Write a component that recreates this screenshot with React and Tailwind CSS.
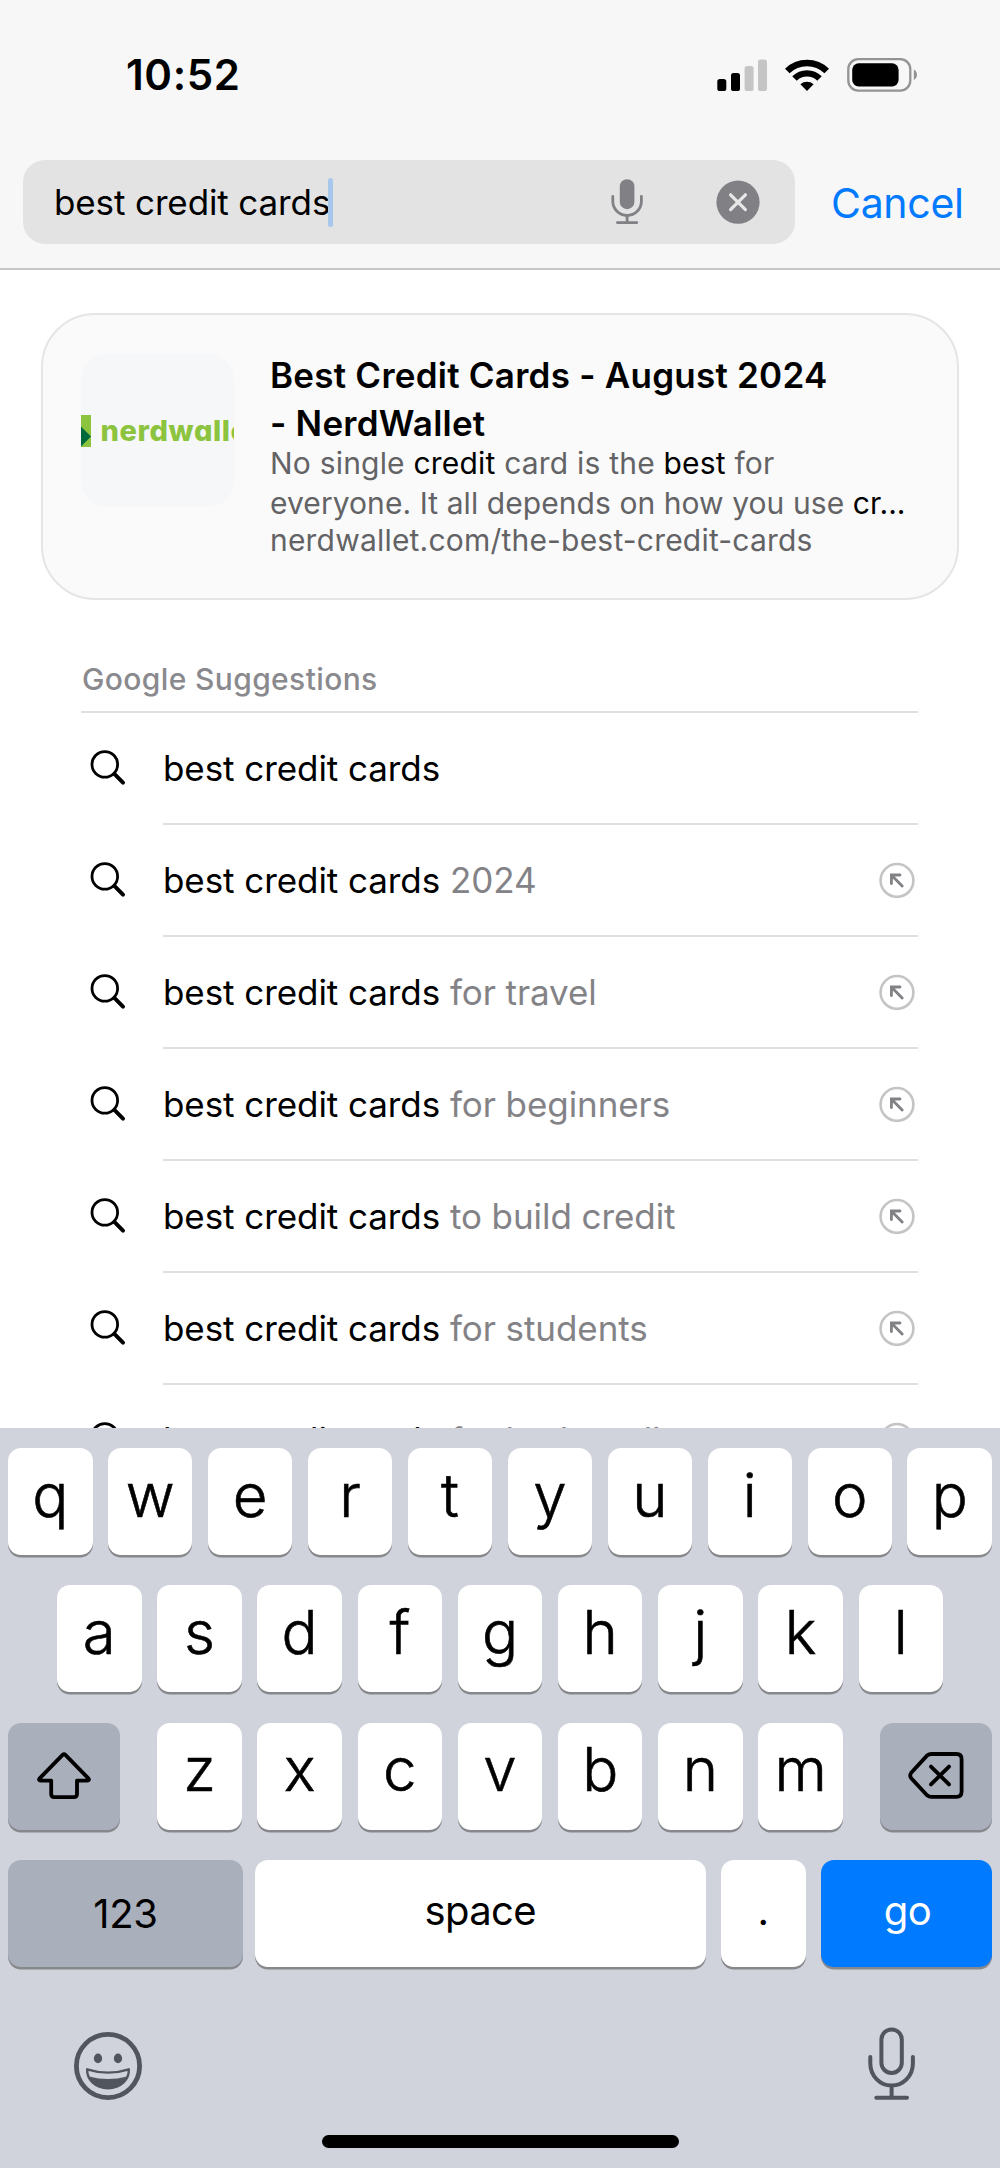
import React, { useState } from "react";
import clsx from "clsx";

const QUERY = "best credit cards";

const suggestions = [
  "",
  "2024",
  "for travel",
  "for beginners",
  "to build credit",
  "for students",
  "for bad credit",
];

const topRow = ["q", "w", "e", "r", "t", "y", "u", "i", "o", "p"];
const middleRow = ["a", "s", "d", "f", "g", "h", "j", "k", "l"];
const bottomRow = ["z", "x", "c", "v", "b", "n", "m"];

const SignalIcon = () => (
  <svg width="50" height="32" viewBox="0 0 50 32">
    <rect x="0.3" y="20" width="9" height="12" rx="2.6" fill="#000" />
    <rect x="14" y="14" width="9" height="18" rx="2.6" fill="#000" />
    <rect x="27.6" y="7" width="9" height="25" rx="2.6" fill="#c5c5c5" />
    <rect x="41" y="0.4" width="9" height="31.6" rx="2.6" fill="#c5c5c5" />
  </svg>
);

const WifiIcon = () => (
  <svg width="44" height="32" viewBox="0 0 44 32" fill="none">
    <path d="M2.3 12A28.3 28.3 0 0 1 41.7 12" stroke="#000" strokeWidth="6.6" />
    <path d="M9.5 19.5A17.8 17.8 0 0 1 34.5 19.5" stroke="#000" strokeWidth="6.4" />
    <path d="M22 32L15.4 25.3A10 10 0 0 1 28.6 25.3Z" fill="#000" />
  </svg>
);

const BatteryIcon = () => (
  <svg width="71" height="34" viewBox="0 0 71 34" fill="none">
    <rect x="1.3" y="1.2" width="62" height="31.4" rx="10" stroke="#949494" strokeWidth="2.3" />
    <rect x="5.2" y="5.3" width="46.4" height="23.2" rx="6.5" fill="#000" />
    <path d="M66.8 11.5Q70 13.5 70 16.8T66.8 22Z" fill="#949494" />
  </svg>
);

const FieldMicIcon = () => (
  <svg width="32" height="46" viewBox="0 0 32 46" fill="none" stroke="#808085" strokeWidth="2.8" strokeLinecap="round">
    <rect x="8.8" y="0.2" width="14.6" height="30" rx="7.3" fill="#808085" stroke="none" />
    <path d="M1.8 17.5V22.2A14.3 14.3 0 0 0 30.4 22.2V17.5" />
    <path d="M16.1 37V43.5M6.4 43.6H25.8" />
  </svg>
);

const ClearIcon = () => (
  <svg width="44" height="44" viewBox="0 0 44 44" fill="none">
    <circle cx="22" cy="22.2" r="21.6" fill="#808085" />
    <path d="M14.6 14.8L29.4 29.6M29.4 14.8L14.6 29.6" stroke="#e8e8e8" strokeWidth="3.2" strokeLinecap="round" />
  </svg>
);

const SearchIcon = () => (
  <svg width="36" height="36" viewBox="0 0 36 36" fill="none" stroke="#000" strokeLinecap="round">
    <circle cx="14.8" cy="14.4" r="12.8" strokeWidth="2.8" />
    <path d="M24.6 24.2L33 32.6" strokeWidth="4" />
  </svg>
);

const FillArrowIcon = () => (
  <svg width="36" height="36" viewBox="0 0 36 36" fill="none" strokeLinecap="round">
    <circle cx="18" cy="18.4" r="16.4" stroke="#c4c4c6" strokeWidth="2.6" />
    <path d="M12.4 21.6V13H21M12.8 13.4L23.2 23.9" stroke="#808085" strokeWidth="2.8" />
  </svg>
);

const ShiftIcon = () => (
  <svg width="54" height="48" viewBox="0 0 54 48" fill="none" stroke="#000" strokeWidth="3.8" strokeLinejoin="round">
    <path d="M25.6 2.9Q27 1.5 28.4 2.9L51.6 26.6Q52.6 28.4 50.4 28.6H40V42Q40 45.2 36.8 45.2H17.2Q14.2 45.2 14.2 42V28.6H3.6Q1.4 28.4 2.4 26.6Z" />
  </svg>
);

const DeleteIcon = () => (
  <svg width="56" height="48" viewBox="0 0 56 48" fill="none" stroke="#000" strokeWidth="3.8" strokeLinecap="round" strokeLinejoin="round">
    <path d="M19 3.6Q21 2 23.6 2H48.4Q53.6 2 53.6 7.2V39.4Q53.6 44.8 48.4 44.8H23.6Q21 44.8 19 43.2L3.2 26.2Q1.2 23.5 3.2 20.8Z" />
    <path d="M23 14.6L41 32.4M41 14.6L23 32.4" />
  </svg>
);

const EmojiIcon = () => (
  <svg width="70" height="70" viewBox="0 0 70 70" fill="none">
    <circle cx="35" cy="35" r="31.6" stroke="#51555e" strokeWidth="4.8" />
    <ellipse cx="25" cy="27.4" rx="4.1" ry="4.9" fill="#51555e" />
    <ellipse cx="45" cy="27.4" rx="4.1" ry="4.9" fill="#51555e" />
    <path
      d="M14.2 38.3Q35 45 55.8 38.3C56.4 48 48 57.2 35 57.2S13.6 48 14.2 38.3Z"
      stroke="#51555e"
      strokeWidth="2.4"
      strokeLinejoin="round"
    />
    <path d="M16 45.4Q35 50.5 54 45.4C51 53.5 43.5 57.6 35 57.6S19 53.5 16 45.4Z" fill="#51555e" />
  </svg>
);

const DictationIcon = () => (
  <svg width="50" height="74" viewBox="0 0 50 74" fill="none" stroke="#51555e" strokeWidth="4" strokeLinecap="round">
    <rect x="14.4" y="2.4" width="20.4" height="43.6" rx="10.2" />
    <path d="M3.3 30V36.5A21.3 22 0 0 0 45.9 36.5V30" />
    <path d="M24.6 59V70M9.3 70.8H40" />
  </svg>
);

const StatusBar = () => (
  <div className="flex h-[149px] items-center justify-between pr-[82px] pl-[126px]">
    <span className="text-[42px] font-semibold tracking-[0.6px]">10:52</span>
    <div className="flex items-center">
      <SignalIcon />
      <div className="ml-[18px]">
        <WifiIcon />
      </div>
      <div className="ml-[18px]">
        <BatteryIcon />
      </div>
    </div>
  </div>
);

const SearchBar = ({ value, onClear }) => (
  <div className="flex items-center pt-[11px] pl-[23px]">
    <div className="flex h-[84px] w-[772px] items-center rounded-[22px] bg-[#e3e3e3] pr-[35px] pl-[31px]">
      <span className="text-[35px] leading-[44px] tracking-[-0.12px]">{value}</span>
      <span className="-ml-[2px] h-[49px] w-[5px] rounded-full bg-[#a7c8ec]" />
      <div className="ml-auto flex items-center gap-[73px]">
        <FieldMicIcon />
        <button onClick={onClear}>
          <ClearIcon />
        </button>
      </div>
    </div>
    <button className="ml-9 pt-[3px] text-[41px] tracking-[-0.3px] text-[#007aff]">
      Cancel
    </button>
  </div>
);

const NerdWalletThumb = () => (
  <div className="flex h-[153px] w-[153px] shrink-0 items-center overflow-hidden rounded-[26px] bg-[#f6f7f9]">
    <svg width="10" height="32" viewBox="0 0 10 32" className="shrink-0">
      <rect width="10" height="32" fill="#8cc440" />
      <path d="M0 11.5L10 21.5L0 31.5Z" fill="#00693c" />
    </svg>
    <span className="ml-[9.5px] pt-px text-[29px] font-extrabold tracking-[0.6px] text-[#8cc440] [font-feature-settings:'cv11']">
      nerdwallet
    </span>
  </div>
);

const TopHit = () => (
  <div className="mx-[41px] mt-[43px] flex h-[287px] rounded-[54px] border-2 border-[#e5e5e5] bg-[#fafafa] pl-[38px]">
    <div className="pt-[39px]">
      <NerdWalletThumb />
    </div>
    <div className="ml-9 pt-[35.5px]">
      <h2 className="text-[35px] leading-[48.5px] font-semibold tracking-[0.24px]">
        Best Credit Cards - August 2024
        <br />- NerdWallet
      </h2>
      <div className="-mt-[5px] text-[30px] leading-[40.5px] whitespace-nowrap text-[#636366]">
        <p className="tracking-[0.2px]">
          No single <span className="text-black">credit</span> card is the{" "}
          <span className="text-black">best</span> for
        </p>
        <p className="tracking-[0.07px]">
          everyone. It all depends on how you use{" "}
          <span className="text-black">cr...</span>
        </p>
      </div>
      <p className="text-[30px] leading-[33px] tracking-[0.2px] text-[#636366]">
        nerdwallet.com/the-best-credit-cards
      </p>
    </div>
  </div>
);

const SuggestionRow = ({ rest }) => (
  <li className="flex h-28">
    <div className="w-[82px] shrink-0 pt-[37px] pl-[9px]">
      <SearchIcon />
    </div>
    <div className="flex flex-1 items-center justify-between border-b-2 border-[#dfdfe0] pr-[3px]">
      <span className="text-[35px] tracking-[-0.07px] text-[#838387]">
        <span className="text-black">{QUERY}</span> {rest}
      </span>
      {rest && <FillArrowIcon />}
    </div>
  </li>
);

const Key = ({ label, className, children }) => (
  <button
    aria-label={label}
    className={clsx(
      "flex h-[107px] items-center justify-center rounded-[13px] shadow-[0_2.5px_0_#87888c]",
      className
    )}
  >
    {children}
  </button>
);

const LetterKey = ({ letter }) => (
  <Key
    label={letter}
    className="w-[84.5px] bg-white pb-[14px] text-[60px] leading-none font-light [-webkit-text-stroke:0.6px_#000]"
  >
    {letter}
  </Key>
);

const Keyboard = () => (
  <div className="h-[740px] shrink-0 bg-[#d0d3db] px-2 pt-5">
    <div className="flex flex-col gap-[30.3px]">
      <div className="flex justify-between">
        {topRow.map((l) => (
          <LetterKey key={l} letter={l} />
        ))}
      </div>
      <div className="flex justify-between px-[49px]">
        {middleRow.map((l) => (
          <LetterKey key={l} letter={l} />
        ))}
      </div>
      <div className="flex justify-between">
        <Key label="shift" className="w-[112px] bg-[#a9afbb]">
          <ShiftIcon />
        </Key>
        <div className="flex gap-[15.7px]">
          {bottomRow.map((l) => (
            <LetterKey key={l} letter={l} />
          ))}
        </div>
        <Key label="delete" className="w-[112px] bg-[#a9afbb]">
          <DeleteIcon />
        </Key>
      </div>
      <div className="flex text-[40px]">
        <Key className="w-[235px] bg-[#a9afbb] pt-0.5 tracking-[-0.3px]">123</Key>
        <Key className="ml-3 w-[450.5px] bg-white pb-[5px] tracking-[-0.6px]">
          space
        </Key>
        <Key className="ml-[15.5px] w-[84.5px] bg-white pb-1">.</Key>
        <Key className="ml-[15.5px] flex-1 bg-[#007aff] pb-[5px] pl-0.5 tracking-[-0.5px] text-white">
          go
        </Key>
      </div>
    </div>
    <div className="flex justify-between pt-[60px] pr-[75px] pl-[65px]">
      <div className="pt-1">
        <EmojiIcon />
      </div>
      <DictationIcon />
    </div>
    <div className="mx-auto mt-[34px] h-[13px] w-[357px] rounded-full bg-black" />
  </div>
);

const App = () => {
  const [query, setQuery] = useState(QUERY);

  return (
    <div className="flex h-[2168px] w-[1000px] flex-col overflow-hidden bg-white font-['Inter',sans-serif] text-black">
      <header className="h-[270px] shrink-0 border-b-2 border-[#c6c6c8] bg-[#f7f7f7]">
        <StatusBar />
        <SearchBar value={query} onClear={() => setQuery("")} />
      </header>

      <main className="min-h-0 flex-1 overflow-hidden">
        <TopHit />
        <section className="mr-[82px] ml-[81px]">
          <h3 className="border-b-2 border-[#dfdfe0] pt-[61px] pb-3.5 pl-px text-[30px] leading-9 font-medium tracking-[0.37px] text-[#8a8a8e]">
            Google Suggestions
          </h3>
          <ul>
            {suggestions.map((rest) => (
              <SuggestionRow key={rest} rest={rest} />
            ))}
          </ul>
        </section>
      </main>

      <Keyboard />
    </div>
  );
};

export default App;
